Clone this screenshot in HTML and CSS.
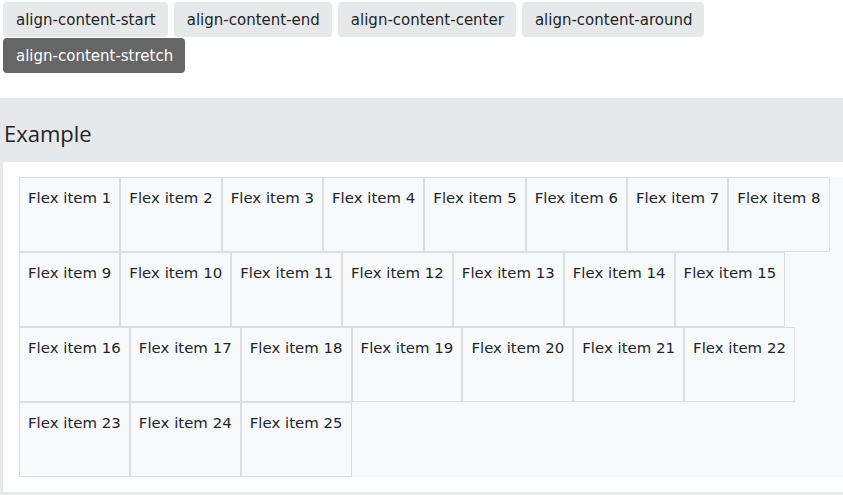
FILE: index.html
```html
<!DOCTYPE html>
<html lang="en">
<head>
    <meta charset="UTF-8">
    <meta name="viewport" content="width=device-width, initial-scale=1.0">
    <title>Align content</title>
    <link rel="stylesheet" href="styles.css">
</head>
<body>
    <div class="toolbar">
        <button class="opt">align-content-start</button>
        <button class="opt">align-content-end</button>
        <button class="opt">align-content-center</button>
        <button class="opt">align-content-around</button>
        <button class="opt active">align-content-stretch</button>
    </div>

    <section class="example">
        <h2>Example</h2>
        <div class="panel">
            <div class="flex-box" id="flexBox">
                <!-- items get added here -->
            </div>
        </div>
    </section>
<script>
// fill the flex container
const box = document.getElementById('flexBox');
for (let i = 1; i <= 25; i++) {
    const item = document.createElement('div');
    item.className = 'flex-item';
    item.textContent = 'Flex item ' + i;
    box.appendChild(item);
}

const opts = document.querySelectorAll('.opt');
opts.forEach(btn => {
    btn.addEventListener('click', () => {
        opts.forEach(b => b.classList.remove('active'));
        btn.classList.add('active');
    });
});
</script>
</body>
</html>
```

FILE: styles.css
```css
:root {
    --light-gray: #e7e8ea;
    --dark-gray: #666666;
    --text: #212529;
    --item-bg: #f8f9fa;
    --item-border: #dcdde0;
}

body {
    margin: 0;
    font-family: 'DejaVu Sans', Verdana, sans-serif;
    color: var(--text);
    background-color: white;
}

.toolbar {
    display: flex;
    flex-wrap: wrap;
    column-gap: 6px;
    row-gap: 1px;
    padding: 2px 3px 0;
}

.opt {
    font-family: inherit;
    font-size: 15px;
    color: var(--text);
    background-color: var(--light-gray);
    border: none;
    border-radius: 4px;
    padding: 0 12px 0 13px;
    height: 35px;
    cursor: pointer;
}

.opt.active {
    background-color: var(--dark-gray);
    color: white;
}

.example {
    margin-top: 25px;
    background-color: var(--light-gray);
    padding-bottom: 3px;
}

.example h2 {
    margin: 0;
    padding: 20px 4px 0;
    height: 44px;
    font-family: 'Open Sans', 'Noto Sans', sans-serif;
    font-weight: normal;
    font-size: 22px;
}

.panel {
    background-color: white;
    margin-left: 3px;
    padding: 15px 0 15px 16px;
}

.flex-box {
    display: flex;
    flex-wrap: wrap;
    align-content: stretch;
    height: 300px;
    background-color: var(--item-bg);
}

.flex-item {
    padding: 9px 8px 8px;
    font-size: 14.9px;
    letter-spacing: 0.03px;
    line-height: 22px;
    background-color: var(--item-bg);
    border: 1px solid var(--item-border);
}
```
